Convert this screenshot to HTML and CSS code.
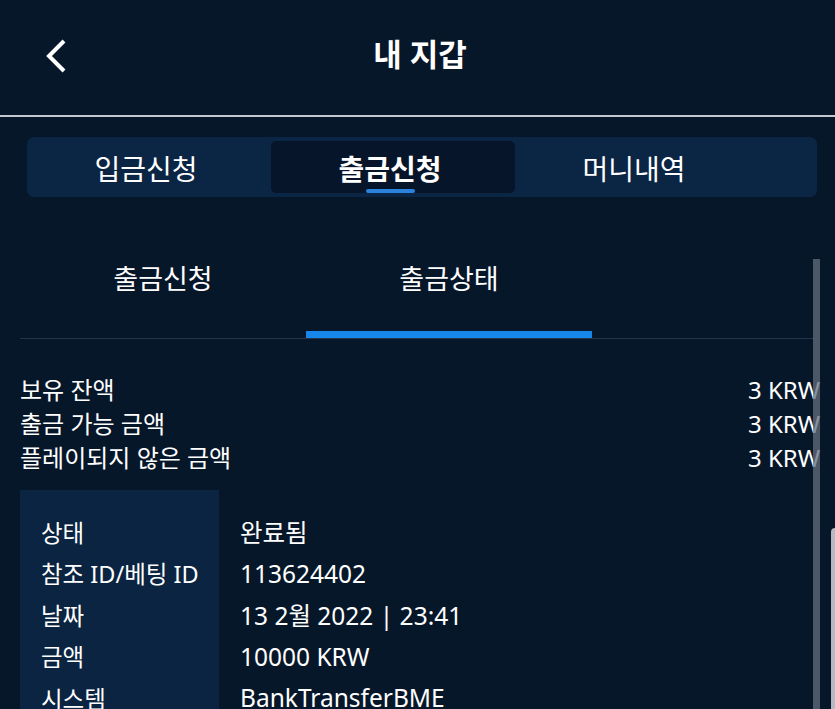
FILE: index.html
```html
<!DOCTYPE html>
<html lang="ko">
<head>
    <meta charset="UTF-8">
    <meta name="viewport" content="width=device-width, initial-scale=1.0">
    <title>내 지갑</title>
    <link rel="stylesheet" href="styles.css">
</head>
<body>
    <header class="topbar">
        <a class="back-btn" href="#" aria-label="뒤로">
            <svg width="24" height="36" viewBox="0 0 24 36">
                <path d="M20 3 L5 18 L20 33" fill="none" stroke="#fff" stroke-width="4"/>
            </svg>
        </a>
        <h1 class="title">내 지갑</h1>
        <span></span>
    </header>

    <nav class="segment">
        <a class="segment-item" href="#">입금신청</a>
        <a class="segment-item active" href="#">출금신청</a>
        <a class="segment-item" href="#">머니내역</a>
    </nav>

    <div class="scroll-area">
        <div class="sub-tabs">
            <a class="sub-tab" href="#">출금신청</a>
            <a class="sub-tab active" href="#">출금상태</a>
        </div>

        <div class="balance">
            <div class="balance-row"><span>보유 잔액</span><span>3 KRW</span></div>
            <div class="balance-row"><span>출금 가능 금액</span><span>3 KRW</span></div>
            <div class="balance-row"><span>플레이되지 않은 금액</span><span>3 KRW</span></div>
        </div>

        <div class="details">
            <div class="label">상태</div><div class="value">완료됨</div>
            <div class="label">참조 ID/베팅 ID</div><div class="value">113624402</div>
            <div class="label">날짜</div><div class="value">13 2월 2022 | 23:41</div>
            <div class="label">금액</div><div class="value">10000 KRW</div>
            <div class="label">시스템</div><div class="value">BankTransferBME</div>
        </div>

        <div class="scrollbar"></div>
    </div>

    <div class="edge"></div>
</body>
</html>
```

FILE: styles.css
```css
html, body {
    overflow: hidden;
}
body {
    margin: 0;
    background-color: #07172a;
    color: #fff;
    font-family: "Noto Sans", "Noto Sans CJK KR", sans-serif;
    position: relative;
    height: 709px;
}
a {
    color: inherit;
    text-decoration: none;
}
.topbar {
    height: 115px;
    display: grid;
    grid-template-columns: 1fr auto 1fr;
    align-items: center;
    border-bottom: 2px solid #c3c7cf;
}
.back-btn {
    display: flex;
    padding-left: 44px;
    padding-bottom: 4px;
}
.title {
    margin: 0;
    font-size: 31px;
    font-weight: 700;
    line-height: 1;
    padding-bottom: 6px;
    padding-left: 5px;
}
.segment {
    margin: 20px 18px 0 27px;
    height: 60px;
    box-sizing: border-box;
    padding: 4px 0;
    background: #0b2544;
    border-radius: 7px;
    display: grid;
    grid-template-columns: repeat(3, 244px);
}
.segment-item {
    display: flex;
    align-items: center;
    justify-content: center;
    font-size: 28px;
    border-radius: 5px;
    position: relative;
    padding-top: 1px;
    padding-right: 6px;
}
.segment-item.active {
    background: #07152a;
    font-weight: 700;
}
.segment-item.active::after {
    content: "";
    position: absolute;
    bottom: 0;
    left: 50%;
    width: 49px;
    height: 4px;
    margin-left: -27px;
    border-radius: 2px;
    background: #2a82dc;
}
.scroll-area {
    position: relative;
    margin-top: 62px;
    padding: 0 15px 20px 20px;
}
.sub-tabs {
    display: flex;
    border-bottom: 1px solid #25344a;
    margin-right: 5px;
}
.sub-tab {
    width: 286px;
    height: 79px;
    box-sizing: border-box;
    padding-top: 1px;
    text-align: center;
    font-size: 27px;
    line-height: 38px;
}
.sub-tab.active {
    box-shadow: inset 0 -7px 0 #1786ea;
}
.balance {
    margin-top: 34px;
}
.balance-row {
    display: flex;
    justify-content: space-between;
    font-size: 24px;
    line-height: 34px;
}
.details {
    margin-top: 15px;
    padding: 20px 0;
    display: grid;
    grid-template-columns: 199px 1fr;
    grid-auto-rows: 41.5px;
    align-items: center;
    background: linear-gradient(to right, #0a2441 199px, transparent 199px);
    font-size: 23.5px;
}
.label {
    padding-left: 21px;
    padding-top: 2px;
}
.value {
    padding-left: 21px;
    padding-top: 2px;
    font-size: 24.5px;
}
.scrollbar {
    position: absolute;
    right: 15px;
    top: 0;
    bottom: 0;
    width: 7px;
    background: rgba(100, 110, 124, 0.75);
}
.edge {
    position: absolute;
    right: 0;
    top: 528px;
    bottom: 0;
    width: 4px;
    background: #b5b9c1;
    border-top-left-radius: 4px;
}
```
